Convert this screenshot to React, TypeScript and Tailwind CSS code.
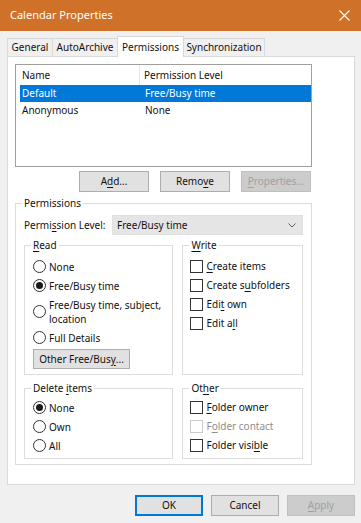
import React from "react";

const U = ({ children }: { children: React.ReactNode }) => <span className="underline underline-offset-[2px]">{children}</span>;

function Radio({ checked, label, h = "h-[19px]" }: { checked?: boolean; label: React.ReactNode; h?: string }) {
  return (
    <div className={`flex items-center ${h}`}>
      <div className="w-[13px] h-[13px] shrink-0 rounded-full border border-[#333] bg-white flex items-center justify-center mr-[3px]">
        {checked && <div className="w-[7px] h-[7px] rounded-full bg-[#1a1a1a]" />}
      </div>
      <div className="leading-[14px] whitespace-nowrap">{label}</div>
    </div>
  );
}

function Check({ label, disabled }: { label: React.ReactNode; disabled?: boolean }) {
  return (
    <div className="flex items-center h-[19px]">
      <div className={`w-[13px] h-[13px] shrink-0 border bg-white mr-[3px] ${disabled ? "border-[#cccccc]" : "border-[#333]"}`} />
      <div className={`whitespace-nowrap ${disabled ? "text-[#8d8d8d]" : ""}`}>{label}</div>
    </div>
  );
}

function Group({ title, className, children }: { title: React.ReactNode; className: string; children: React.ReactNode }) {
  return (
    <div className={`relative border border-[#dcdcdc] ${className}`}>
      <span className="absolute -top-[8px] left-[6px] bg-white px-[2px] leading-[14px] whitespace-nowrap">{title}</span>
      {children}
    </div>
  );
}

function Btn({ children, w = "w-[70px]", disabled, primary }: { children: React.ReactNode; w?: string; disabled?: boolean; primary?: boolean }) {
  const cls = disabled
    ? "bg-[#cccccc] border-[#bfbfbf] text-[#a0a0a0]"
    : primary
    ? "bg-[#e1e1e1] border-[#0078d7] border-[2px] text-[#111]"
    : "bg-[#e1e1e1] border-[#adadad] text-[#111]";
  return <div className={`${w} h-[21px] border flex items-center justify-center whitespace-nowrap ${cls}`}>{children}</div>;
}

export default function App() {
  return (
    <div className="w-[361px] h-[523px] bg-[#f0f0f0] flex flex-col font-['Noto_Sans',sans-serif] text-[10px] text-[#111] overflow-hidden">
      {/* Title bar */}
      <div className="h-[31px] bg-[#cf7129] flex items-center justify-between pl-[10px] pr-[11px] shrink-0">
        <span className="text-white text-[11px]">Calendar Properties</span>
        <svg width="11" height="11" viewBox="0 0 11 11">
          <path d="M0.5 0.5 L10.5 10.5 M10.5 0.5 L0.5 10.5" stroke="white" strokeWidth="1.1" />
        </svg>
      </div>

      {/* Tabs */}
      <div className="flex items-end h-[25px] pl-[7px] shrink-0">
        <div className="h-[18px] w-[46px] flex items-center justify-center border border-b-0 border-[#d9d9d9] bg-[#f0f0f0]">General</div>
        <div className="h-[18px] w-[65px] flex items-center justify-center border border-b-0 border-l-0 border-[#d9d9d9] bg-[#f0f0f0]">AutoArchive</div>
        <div className="h-[21px] w-[67px] -ml-px flex items-center justify-center border border-b-0 border-[#d9d9d9] bg-white relative z-10 -mb-px">Permissions</div>
        <div className="h-[18px] w-[81px] flex items-center justify-center border border-b-0 border-l-0 border-[#d9d9d9] bg-[#f0f0f0]">Synchronization</div>
      </div>

      {/* Panel */}
      <div className="ml-[7px] w-[348px] h-[429px] bg-white border border-[#d9d9d9] shrink-0 pl-[7px] pt-[7px]">
        {/* List */}
        <div className="w-[297px] h-[103px] border border-[#a0a0a0] bg-white">
          <div className="flex h-[20px] items-center">
            <div className="w-[124px] h-full flex items-center pl-[6px] border-r border-[#e5e5e5]">Name</div>
            <div className="pl-[4px]">Permission Level</div>
          </div>
          <div className="ml-[4px] h-[17px] bg-[#0078d7] text-white flex items-center">
            <div className="w-[120px] pl-[2px]">Default</div>
            <div className="pl-[5px]">Free/Busy time</div>
          </div>
          <div className="ml-[4px] h-[17px] flex items-center">
            <div className="w-[120px] pl-[2px]">Anonymous</div>
            <div className="pl-[5px]">None</div>
          </div>
        </div>

        {/* List buttons */}
        <div className="w-[297px] flex justify-end gap-[11px] mt-[4px] pr-[1px]">
          <Btn>A<U>d</U>d...</Btn>
          <Btn>Remo<U>v</U>e</Btn>
          <Btn disabled><U>P</U>roperties...</Btn>
        </div>

        {/* Permissions group */}
        <Group title="Permissions" className="w-[297px] h-[262px] mt-[11px] pt-[11px] pl-[8px] pr-[8px]">
          <div className="flex items-center h-[20px]">
            <div className="w-[88px] whitespace-nowrap">Permi<U>s</U>sion Level:</div>
            <div className="flex-1 h-[20px] bg-[#e5e5e5] border border-[#e0e0e0] flex items-center justify-between pl-[4px] pr-[6px]">
              <span>Free/Busy time</span>
              <svg width="8" height="5" viewBox="0 0 8 5">
                <path d="M0.5 0.5 L4 4 L7.5 0.5" stroke="#606060" strokeWidth="1" fill="none" />
              </svg>
            </div>
          </div>

          <div className="flex gap-[9px] mt-[10px]">
            <Group title={<><U>R</U>ead</>} className="w-[150px] h-[130px] pt-[11px] pl-[8px]">
              <Radio label="None" />
              <Radio checked label="Free/Busy time" />
              <Radio h="h-[33px]" label={<>Free/Busy time, subject,<br />location</>} />
              <Radio label="Full Details" />
              <div className="mt-[2px] w-[97px] h-[20px] bg-[#e1e1e1] border border-[#adadad] flex items-center justify-center whitespace-nowrap">Other Free/Bus<U>y</U>...</div>
            </Group>
            <Group title={<><U>W</U>rite</>} className="w-[121px] h-[130px] pt-[11px] pl-[7px]">
              <Check label={<><U>C</U>reate items</>} />
              <Check label={<>Create s<U>u</U>bfolders</>} />
              <Check label={<>Edi<U>t</U> own</>} />
              <Check label={<>Edit a<U>l</U>l</>} />
            </Group>
          </div>

          <div className="flex gap-[9px] mt-[13px]">
            <Group title={<>Delete <U>i</U>tems</>} className="w-[150px] h-[71px] pt-[9px] pl-[8px]">
              <Radio checked label="None" />
              <Radio label="Own" />
              <Radio label="All" />
            </Group>
            <Group title={<>Ot<U>h</U>er</>} className="w-[121px] h-[71px] pt-[9px] pl-[7px]">
              <Check label={<><U>F</U>older owner</>} />
              <Check disabled label={<>F<U>o</U>lder contact</>} />
              <Check label={<>Folder visi<U>b</U>le</>} />
            </Group>
          </div>
        </Group>
      </div>

      {/* Footer */}
      <div className="flex justify-end gap-[8px] mt-[10px] pr-[6px]">
        <Btn w="w-[68px]" primary>OK</Btn>
        <Btn w="w-[68px]">Cancel</Btn>
        <Btn w="w-[68px]" disabled><U>A</U>pply</Btn>
      </div>
    </div>
  );
}
